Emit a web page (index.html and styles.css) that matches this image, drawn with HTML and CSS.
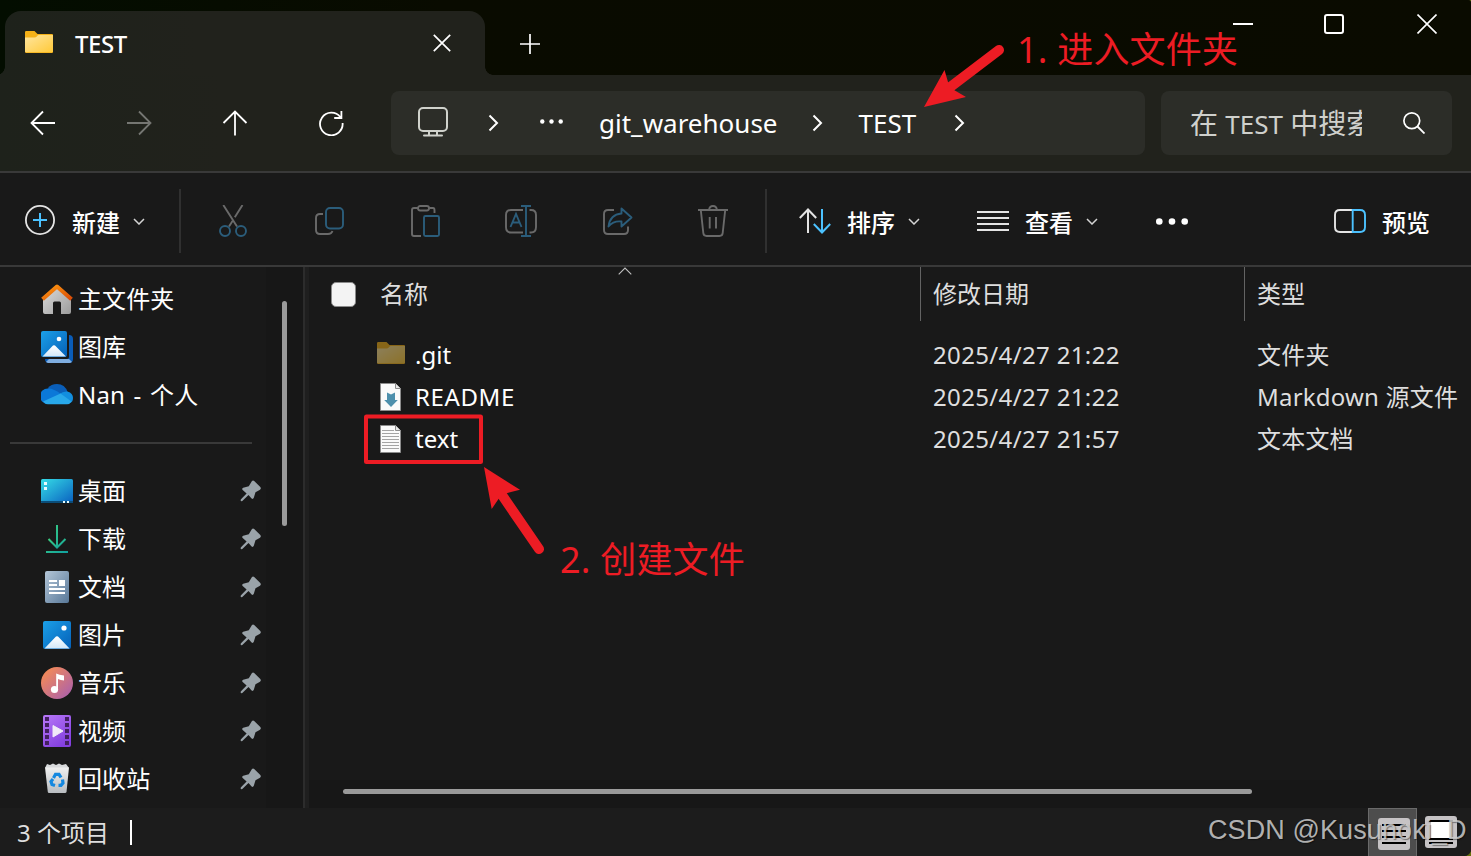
FILE: index.html
```html
<!DOCTYPE html>
<html lang="zh-CN">
<head>
    <meta charset="UTF-8">
    <meta name="viewport" content="width=device-width, initial-scale=1.0">
    <title>TEST</title>
    <link rel="stylesheet" href="styles.css">
</head>
<body>
    <!-- 公用图标 -->
    <svg class="defs" width="0" height="0">
        <defs>
            <linearGradient id="g-folder" x1="0" y1="0" x2="1" y2="1"><stop offset="0" stop-color="#ffe6a0"/><stop offset="1" stop-color="#ffc938"/></linearGradient>
            <linearGradient id="g-roof" x1="0" y1="0" x2="1" y2="1"><stop offset="0" stop-color="#ff9a10"/><stop offset="1" stop-color="#d84a08"/></linearGradient>
            <linearGradient id="g-wall" x1="0" y1="0" x2="1" y2="1"><stop offset="0" stop-color="#dedede"/><stop offset="1" stop-color="#9c9c9c"/></linearGradient>
            <linearGradient id="g-pic" x1="0" y1="0" x2="1" y2="1"><stop offset="0" stop-color="#1ba0e8"/><stop offset="1" stop-color="#0560b8"/></linearGradient>
            <linearGradient id="g-desk" x1="0" y1="0" x2="1" y2="1"><stop offset="0" stop-color="#35dce6"/><stop offset="1" stop-color="#0a60c0"/></linearGradient>
            <linearGradient id="g-down" x1="0" y1="0" x2="1" y2="1"><stop offset="0" stop-color="#3ccf80"/><stop offset="1" stop-color="#10a0a0"/></linearGradient>
            <linearGradient id="g-doc" x1="0" y1="0" x2="1" y2="1"><stop offset="0" stop-color="#b4c6d8"/><stop offset="1" stop-color="#587898"/></linearGradient>
            <linearGradient id="g-music" x1="0" y1="0" x2="1" y2="1"><stop offset="0.1" stop-color="#f58b55"/><stop offset="1" stop-color="#a45cb4"/></linearGradient>
            <linearGradient id="g-video" x1="0" y1="0" x2="0.6" y2="1"><stop offset="0" stop-color="#b878f8"/><stop offset="1" stop-color="#8440e0"/></linearGradient>
            <linearGradient id="g-snow" x1="0" y1="0" x2="0" y2="1"><stop offset="0" stop-color="#ffffff"/><stop offset="1" stop-color="#d2e8fa"/></linearGradient>
            <linearGradient id="g-bin" x1="0" y1="0" x2="0" y2="1"><stop offset="0" stop-color="#f0f0f0"/><stop offset="1" stop-color="#b8bcc0"/></linearGradient>
        </defs>
        <symbol id="folder" viewBox="0 0 28 22">
            <path d="M0 1.2Q0 0 1.2 0H9.500L12.500 3H27Q28 3 28 4V20.800Q28 22 26.800 22H1.200Q0 22 0 20.800Z" fill="#f5b117"/>
            <path d="M0 6.500H9.500Q11 6.500 12 5.200Q12.800 4 14 4H28V20.500Q28 21.300 27 21.300H1Q0 21.300 0 20.500Z" fill="url(#g-folder)"/>
        </symbol>
        <symbol id="pin" viewBox="0 0 22 22">
            <path d="M11.800 1.200Q13 0 14.200 1.100L20.300 7Q21.500 8.500 20 9.700L15.500 12.300L13.800 17.800Q13 19.600 11.600 18.400L8.500 15L2.300 21Q1.200 21.500 0.800 20.800Q0.300 20 1 19.200L6.600 13.500L2.400 9.800Q1.800 8.400 3.200 7.800L8.800 6.200Z" fill="#9aa3a9"/>
        </symbol>
        <symbol id="caret" viewBox="0 0 12 7"><path d="M1 1L6 6L11 1" fill="none" stroke="#d4d4d4" stroke-width="1.500"/></symbol>
        <symbol id="chevron" viewBox="0 0 11 18"><path d="M1.500 1.500L9 9L1.500 16.500" fill="none" stroke="#fff" stroke-width="2"/></symbol>
    </svg>

    <div class="window">
        <!-- 标题栏 -->
        <header class="titlebar">
            <div class="tab">
                <svg class="tab-icon" width="28" height="22"><use href="#folder"/></svg>
                <span class="tab-title">TEST</span>
                <svg class="tab-close" width="18" height="18" viewBox="0 0 18 18"><path d="M0.800 0.800L17.200 17.200M17.200 0.800L0.800 17.200" stroke="#fff" stroke-width="1.700"/></svg>
            </div>
            <svg class="new-tab" width="20" height="20" viewBox="0 0 20 20"><path d="M10 0V20M0 10H20" stroke="#fff" stroke-width="1.700"/></svg>
            <div class="controls">
                <span class="control"><svg width="20" height="20" viewBox="0 0 20 20"><path d="M0 10H20" stroke="#fff" stroke-width="2"/></svg></span>
                <span class="control maximize"><svg width="20" height="20" viewBox="0 0 20 20"><rect x="1" y="1" width="18" height="18" rx="2" fill="none" stroke="#fff" stroke-width="2"/></svg></span>
                <span class="control"><svg width="20" height="20" viewBox="0 0 20 20"><path d="M0.500 0.500L19.500 19.500M19.500 0.500L0.500 19.500" stroke="#fff" stroke-width="1.600"/></svg></span>
            </div>
        </header>

        <!-- 地址栏 -->
        <div class="navbar">
            <span class="nav-btn"><svg width="26" height="26" viewBox="0 0 26 26"><path d="M25 13H1.500M13 1.500L1.500 13L13 24.500" fill="none" stroke="#fff" stroke-width="1.800"/></svg></span>
            <span class="nav-btn disabled"><svg width="26" height="26" viewBox="0 0 26 26"><path d="M1 13H24.500M13 1.500L24.500 13L13 24.500" fill="none" stroke="#fff" stroke-width="1.800"/></svg></span>
            <span class="nav-btn"><svg width="26" height="26" viewBox="0 0 26 26"><path d="M13 25.500V1.500M1.500 13L13 1.500L24.500 13" fill="none" stroke="#fff" stroke-width="1.800"/></svg></span>
            <span class="nav-btn"><svg width="26" height="26" viewBox="0 0 26 26"><path d="M24.600 13A11.300 11.300 0 1 1 22.400 7.200M23.400 1V8H16.200" fill="none" stroke="#fff" stroke-width="1.800"/></svg></span>
            <div class="address">
                <svg class="pc" width="30" height="30" viewBox="0 0 30 30"><rect x="1" y="1" width="28" height="23" rx="4" fill="none" stroke="#d0d2cc" stroke-width="2"/><path d="M11 24V28M19 24V28M6 28.500H24" stroke="#d0d2cc" stroke-width="2" stroke-linecap="round"/></svg>
                <svg class="sep sep-root" width="11" height="18"><use href="#chevron"/></svg>
                <svg class="more" width="24" height="5" viewBox="0 0 24 5"><g fill="#fff"><circle cx="2.300" cy="2.500" r="2.200"/><circle cx="11.500" cy="2.500" r="2.200"/><circle cx="20.700" cy="2.500" r="2.200"/></g></svg>
                <span class="crumb">git_warehouse</span>
                <svg class="sep" width="11" height="18"><use href="#chevron"/></svg>
                <span class="crumb current">TEST</span>
                <svg class="sep" width="11" height="18"><use href="#chevron"/></svg>
            </div>
            <div class="search">
                <span class="search-text">在 <span class="latin">TEST</span> 中搜索</span>
                <svg width="22" height="22" viewBox="0 0 22 22"><circle cx="8.800" cy="8.800" r="7.900" fill="none" stroke="#fff" stroke-width="1.700"/><path d="M14.500 14.500L21.500 21.500" stroke="#fff" stroke-width="1.800"/></svg>
            </div>
        </div>

        <!-- 工具栏 -->
        <div class="toolbar">
            <div class="tool new">
                <svg width="30" height="30" viewBox="0 0 30 30"><circle cx="15" cy="15" r="14.100" fill="none" stroke="#e4e4e4" stroke-width="1.800"/><path d="M15 8V22M8 15H22" stroke="#4cc2ff" stroke-width="2"/></svg>
                <span>新建</span>
                <svg class="caret" width="12" height="7"><use href="#caret"/></svg>
            </div>
            <div class="divider"></div>
            <div class="actions">
                <svg width="32" height="32" viewBox="0 0 32 32" fill="none" stroke-width="1.900"><path d="M6.300 0L20 21.500M25.500 0L17.800 12.300M15.500 16L12 21.500" stroke="#6a6a6a"/><circle cx="8" cy="26" r="5" stroke="#2b5d7b"/><circle cx="24" cy="26" r="5" stroke="#2b5d7b"/></svg>
                <svg width="32" height="32" viewBox="0 0 32 32" fill="none" stroke-width="1.900"><path d="M10 9H7Q3 9 3 13V25Q3 29 7 29H15Q18.500 29 19.500 26" stroke="#6a6a6a"/><rect x="13" y="3" width="17" height="20.500" rx="4" stroke="#2b5d7b"/></svg>
                <svg width="32" height="32" viewBox="0 0 32 32" fill="none" stroke-width="1.900"><path d="M12 31H5Q3 31 3 29V5Q3 3 5 3H9M20 3H24Q25.500 3 25.500 5V8" stroke="#6a6a6a"/><rect x="9" y="1" width="11" height="4.500" rx="2.200" stroke="#6a6a6a"/><rect x="15" y="11" width="15" height="20" rx="1.500" stroke="#2b5d7b"/></svg>
                <svg width="32" height="32" viewBox="0 0 32 32" fill="none" stroke-width="1.900"><path d="M18 5H6Q1 5 1 10V22Q1 27.500 6 27.500H18M24.500 5H26Q31 5 31 10V22Q31 27.500 26 27.500H24.500" stroke="#6a6a6a"/><path d="M16 1H26M16 31H26M21 1V31M5.500 22L11 9L16.500 22M7.500 17.500H14.500" stroke="#2b5d7b"/></svg>
                <svg width="32" height="32" viewBox="0 0 32 32" fill="none" stroke-width="1.900" stroke-linejoin="round"><path d="M13 5H7Q3 5 3 9V25Q3 29 7 29H23Q27 29 27 25V21.500" stroke="#6a6a6a"/><path d="M20.500 3.500L30.500 12.500L20.500 21.500V16.500Q12.500 15.500 7.500 21.500Q9 9.500 20.500 8.500Z" stroke="#2b5d7b"/></svg>
                <svg width="32" height="32" viewBox="0 0 32 32" fill="none" stroke-width="1.900" stroke="#6a6a6a"><path d="M1 5H31M12 5Q12.500 1 16 1T20 5M3.800 5L6.300 28Q6.600 31 9.500 31H22.500Q25.400 31 25.700 28L28.200 5M12.700 12V23.500M19 12V23.500"/></svg>
            </div>
            <div class="divider"></div>
            <div class="tool sort">
                <svg width="32" height="26" viewBox="0 0 32 26" fill="none" stroke-width="2"><path d="M9 25V2M0.800 10L9 1.500L17.200 10" stroke="#e4e4e4"/><path d="M23 1V24M14.800 16L23 24.500L31.200 16" stroke="#4cc2ff"/></svg>
                <span>排序</span>
                <svg class="caret" width="12" height="7"><use href="#caret"/></svg>
            </div>
            <div class="tool view">
                <svg width="32" height="20" viewBox="0 0 32 20"><path d="M0 1H32M0 7H32M0 13H32M0 19H32" stroke="#e4e4e4" stroke-width="1.900"/></svg>
                <span>查看</span>
                <svg class="caret" width="12" height="7"><use href="#caret"/></svg>
            </div>
            <svg class="overflow" width="32" height="7" viewBox="0 0 32 7"><g fill="#fff"><circle cx="3.300" cy="3.500" r="3.300"/><circle cx="16" cy="3.500" r="3.300"/><circle cx="28.700" cy="3.500" r="3.300"/></g></svg>
            <div class="tool preview">
                <svg width="32" height="24" viewBox="0 0 32 24" fill="none" stroke-width="1.900"><path d="M18 1H6Q1 1 1 6V18Q1 23 6 23H18" stroke="#e4e4e4"/><path d="M18.700 1H26Q31 1 31 6V18Q31 23 26 23H18.700Z" stroke="#4cc2ff"/></svg>
                <span>预览</span>
            </div>
        </div>

        <div class="content">
            <!-- 侧边栏 -->
            <aside class="sidebar">
                <ul class="places">
                    <li>
                        <svg width="32" height="32" viewBox="0 0 32 32"><path d="M2 14L16 2L30 14V29Q30 31 28 31H20V20Q20 18.500 18.500 18.500H13.500Q12 18.500 12 20V31H4Q2 31 2 29Z" fill="url(#g-wall)"/><path d="M1.500 16.300L16 3.500L30.500 16.300" fill="none" stroke="url(#g-roof)" stroke-width="4" stroke-linejoin="round"/></svg>
                        <span>主文件夹</span>
                    </li>
                    <li>
                        <svg width="32" height="32" viewBox="0 0 32 32"><path d="M28 4Q32 4 32 8V28Q32 32 28 32H8Q4 32 4 28H26Q28 28 28 26Z" fill="#0a5cb8"/><path d="M5 31L8 28H28L31 31L29 32H7Z" fill="#80aee0"/><rect width="26" height="26" rx="2" fill="url(#g-pic)"/><path d="M1.500 25.500L11 15.500Q13 13 15 15.500L25 25.500Z" fill="url(#g-snow)"/><circle cx="18" cy="8" r="2.300" fill="#fff"/></svg>
                        <span>图库</span>
                    </li>
                    <li>
                        <svg width="32" height="32" viewBox="0 0 32 32"><path d="M7 9Q10 5 16 5Q24 5 26.500 13L12 18Z" fill="#0a5eb8"/><path d="M7 9.500Q12 9 20 15L7 25H6.500A7.700 7.700 0 0 1 7 9.500" fill="#0b78d8"/><path d="M18.500 15Q22 12 26.500 12.500Q32 14 32 19Q32 23 29 24Z" fill="#128edf"/><path d="M2 22.500L19.500 14.500L30.500 22.500Q29 25.200 26 25.200H7Q4 25.200 2 22.500Z" fill="#28a8ea"/></svg>
                        <span class="account">Nan - 个人</span>
                    </li>
                </ul>
                <hr class="split">
                <ul class="places">
                    <li>
                        <svg width="32" height="32" viewBox="0 0 32 32"><rect y="4" width="32" height="24" rx="1.500" fill="url(#g-desk)"/><path d="M0 26H32V26.500Q32 28 30.500 28H1.500Q0 28 0 26.500Z" fill="#0b4d78"/><path d="M3 7H6V10H3ZM3 12H6V15H3ZM22 26H24V28H22ZM26 26H28V28H26Z" fill="#e8fbff"/></svg>
                        <span>桌面</span>
                        <svg class="pin" width="22" height="22"><use href="#pin"/></svg>
                    </li>
                    <li>
                        <svg width="32" height="32" viewBox="0 0 32 32"><path d="M7.500 16L16 24.500L24.500 16" fill="none" stroke="url(#g-down)" stroke-width="2"/><path d="M15 2H17V24H15ZM5 28H27V30H5Z" fill="url(#g-down)"/></svg>
                        <span>下载</span>
                        <svg class="pin" width="22" height="22"><use href="#pin"/></svg>
                    </li>
                    <li>
                        <svg width="32" height="32" viewBox="0 0 32 32"><rect x="4" width="24" height="32" rx="2" fill="url(#g-doc)"/><path d="M8 9H16V11H8ZM8 13H16V15H8ZM18 9H24V15H18ZM8 17H24V19H8ZM8 21H24V23H8Z" fill="#fff"/></svg>
                        <span>文档</span>
                        <svg class="pin" width="22" height="22"><use href="#pin"/></svg>
                    </li>
                    <li>
                        <svg width="32" height="32" viewBox="0 0 32 32"><rect x="2" y="2" width="28" height="28" rx="2" fill="url(#g-pic)"/><path d="M3.500 29.500L14 18.500Q16 16 18 18.500L28.500 29.500Z" fill="url(#g-snow)"/><circle cx="23" cy="9" r="2.600" fill="#fff"/></svg>
                        <span>图片</span>
                        <svg class="pin" width="22" height="22"><use href="#pin"/></svg>
                    </li>
                    <li>
                        <svg width="32" height="32" viewBox="0 0 32 32"><circle cx="16" cy="16" r="16" fill="url(#g-music)"/><circle cx="13.500" cy="22.500" r="3.600" fill="#fff"/><path d="M15.200 23V6.500Q18 8 23 8.500V13.500Q19.500 13.200 17 12V23Z" fill="#fff"/></svg>
                        <span>音乐</span>
                        <svg class="pin" width="22" height="22"><use href="#pin"/></svg>
                    </li>
                    <li>
                        <svg width="32" height="32" viewBox="0 0 32 32"><rect x="2" width="28" height="32" rx="2" fill="url(#g-video)"/><path d="M4 2H8V6H4ZM4 8H8V12H4ZM4 14H8V18H4ZM4 20H8V24H4ZM4 26H8V30H4ZM24 2H28V6H24ZM24 8H28V12H24ZM24 14H28V18H24ZM24 20H28V24H24ZM24 26H28V30H24Z" fill="#432060"/><path d="M12 10.500L22 16L12 22Z" fill="#f0eaf8" stroke="#f0eaf8" stroke-linejoin="round"/></svg>
                        <span>视频</span>
                        <svg class="pin" width="22" height="22"><use href="#pin"/></svg>
                    </li>
                    <li>
                        <svg width="32" height="32" viewBox="0 0 32 32"><path d="M4 5L6 1L9 2L12 0.500L15 2L18 0.500L21 2L25 1L28 5Z" fill="#d8dadc"/><path d="M4 4.500H28L25.500 29Q25.200 30 24 30H8Q7 30 6.800 29Z" fill="url(#g-bin)"/><g fill="none" stroke="#1488e0" stroke-width="3.200"><path d="M12.500 15L14.500 11.300H18L20 14.500"/><path d="M21.500 16.500L22 20L20 22.300H17.500"/><path d="M14 22.500L11 21.500L10 18.500L12 16"/></g></svg>
                        <span>回收站</span>
                        <svg class="pin" width="22" height="22"><use href="#pin"/></svg>
                    </li>
                </ul>
                <div class="v-thumb"></div>
            </aside>

            <!-- 文件列表 -->
            <main class="files">
                <div class="row head">
                    <div class="name"><span class="checkbox"></span>名称</div>
                    <div class="date">修改日期</div>
                    <div class="type">类型</div>
                    <svg class="sort-mark" width="14" height="8" viewBox="0 0 14 8"><path d="M0.700 7.300L7 1L13.300 7.300" fill="none" stroke="#c0c0c0" stroke-width="1.100"/></svg>
                </div>
                <div class="row">
                    <div class="name"><svg class="dim" width="28" height="28" viewBox="0 0 28 28"><use href="#folder" y="1" width="28" height="22"/></svg>.git</div>
                    <div class="date">2025/4/27 21:22</div>
                    <div class="type">文件夹</div>
                </div>
                <div class="row">
                    <div class="name readme"><svg width="28" height="28" viewBox="0 0 28 28"><path d="M3.500 0.500H18.500L23.500 5.500V27.500H3.500Z" fill="#fafafa" stroke="#8c8c8c"/><path d="M18.500 0.500V5.500H23.500" fill="#e8e8e8" stroke="#8c8c8c"/><path d="M10 9.500L14 11.500L18 9.500V17H20.800L14 24L7.200 17H10Z" fill="#4d8fac"/></svg>README</div>
                    <div class="date">2025/4/27 21:22</div>
                    <div class="type">Markdown 源文件</div>
                </div>
                <div class="row">
                    <div class="name"><svg width="28" height="28" viewBox="0 0 28 28"><path d="M3.500 0.500H18.500L23.500 5.500V27.500H3.500Z" fill="#fafafa" stroke="#8c8c8c"/><path d="M18.500 0.500V5.500H23.500" fill="#e8e8e8" stroke="#8c8c8c"/><path d="M5 5.500H17M5 8.500H22M5 11.500H22M5 14.500H22M5 17.500H22M5 20.500H22M5 23.500H22" stroke="#a4a4a4"/></svg>text</div>
                    <div class="date">2025/4/27 21:57</div>
                    <div class="type">文本文档</div>
                </div>
                <div class="h-scroll"><div class="h-thumb"></div></div>
            </main>
        </div>

        <!-- 状态栏 -->
        <footer class="statusbar">
            <span class="count">3 个项目</span>
            <span class="bar"></span>
            <div class="view-modes">
                <span class="mode active"><svg width="32" height="32" viewBox="0 0 32 32"><rect width="32" height="32" rx="3" fill="#c6c3c5"/><path d="M4 7H28M4 13H28M4 19H28M4 25H28" stroke="#000" stroke-width="2"/></svg></span>
                <span class="mode"><svg width="32" height="32" viewBox="0 0 32 32"><rect width="32" height="32" rx="3" fill="#c6c3c5"/><path d="M4 5H28M4 23H28M4 27H28" stroke="#000" stroke-width="2"/><rect x="6" y="6" width="20" height="16" fill="#fff"/></svg></span>
            </div>
            <span class="watermark">CSDN @Kusunoki_D</span>
        </footer>

        <!-- 标注 -->
        <svg class="marks" width="1471" height="856" viewBox="0 0 1471 856">
            <g fill="#ed1c24" stroke="#ed1c24">
                <path d="M999 50L951 86.500M539 549L503 496.500" stroke-width="10" stroke-linecap="round"/>
                <path d="M924 107L944.500 70L948 82L954 90L966 97Z" stroke="none"/>
                <path d="M484 467L520 489.700L507.500 493L498.500 499L491.700 509Z" stroke="none"/>
                <rect x="366" y="416.500" width="115" height="45.500" rx="0.500" fill="none" stroke-width="4"/>
            </g>
        </svg>
        <span class="note note-enter">1. 进入文件夹</span>
        <span class="note note-create">2. 创建文件</span>
    </div>
</body>
</html>
```
FILE: styles.css
```css
* {
    margin: 0;
    padding: 0;
    box-sizing: border-box;
}

body {
    width: 1471px;
    height: 856px;
    overflow: hidden;
    background-color: #66700c;
    color: #fff;
    font-family: "Noto Sans", "Noto Sans CJK SC", sans-serif;
    font-size: 24px;
    line-height: 32px;
}

svg {
    display: block;
    flex: none;
}

.defs {
    position: absolute;
}

.window {
    position: relative;
    display: flex;
    flex-direction: column;
    height: 856px;
    overflow: hidden;
    background-color: #191919;
    border-radius: 0 3px 7px 0;
    white-space: nowrap;
}

/* 标题栏 */
.titlebar {
    display: flex;
    height: 75px;
    background: linear-gradient(90deg, #030d00, #090b00 30%, #0a0b00);
}

.tab {
    position: relative;
    display: flex;
    align-items: center;
    width: 480px;
    height: 64px;
    margin: 11px 0 0 5px;
    padding: 0 34px 0 20px;
    background: linear-gradient(90deg, #1e221b, #21221c 40%);
    border-radius: 16px 16px 0 0;
}

.tab::before,
.tab::after {
    content: "";
    position: absolute;
    bottom: 0;
    width: 8px;
    height: 8px;
}

.tab::before {
    left: -8px;
    background: radial-gradient(circle at 0 0, transparent 7.5px, #1e221b 8px);
}

.tab::after {
    right: -8px;
    background: radial-gradient(circle at 100% 0, transparent 7.5px, #21221c 8px);
}

.tab-icon {
    margin-top: -2px;
}

.tab-title {
    margin: 2px 0 0 22px;
    font-weight: 500;
    letter-spacing: -0.4px;
}

.tab-close {
    margin: -1px 0 0 auto;
}

.new-tab {
    margin: 34px 0 0 35px;
}

.controls {
    display: flex;
    gap: 4px;
    margin-left: auto;
}

.control {
    display: flex;
    align-items: center;
    justify-content: center;
    width: 88px;
    height: 48px;
}

.maximize {
    padding-right: 2px;
}

/* 地址栏 */
.navbar {
    display: flex;
    align-items: center;
    height: 98px;
    padding: 0 19px 0 7px;
    background: linear-gradient(90deg, #1e221b, #21221c 15%);
    border-bottom: 2px solid #393939;
}

.nav-btn {
    display: flex;
    justify-content: center;
    width: 72px;
    margin: -1px 24px 0 0;
}

.disabled {
    opacity: 0.38;
}

.address,
.search {
    display: flex;
    align-items: center;
    height: 64px;
    background-color: #2c2d28;
    border-radius: 8px;
}

.address {
    width: 754px;
    padding-left: 27px;
    font-size: 26px;
}

.pc {
    margin-top: -3px;
}

.sep-root {
    margin-left: 40px;
}

.more {
    margin: -4px 35px 0 41px;
}

.crumb {
    margin-right: 34px;
}

.sep + .crumb {
    margin-left: 36px;
}

.crumb.current {
    margin-right: 38px;
}

.search {
    width: 291px;
    margin-left: 16px;
    padding: 0 27px 0 29px;
    justify-content: space-between;
}

.search-text {
    width: 172px;
    overflow: hidden;
    color: #cfd0cc;
    font-size: 28px;
    line-height: 40px;
}

.latin {
    font-size: 26px;
}

/* 工具栏 */
.toolbar {
    display: flex;
    align-items: center;
    height: 94px;
    padding: 4px 41px 0 25px;
    background-color: #191919;
    border-bottom: 2px solid #393939;
}

.tool {
    display: flex;
    align-items: center;
}

.tool span {
    margin-top: 3px;
    font-weight: 500;
}

.new span {
    margin-left: 17px;
}

.new > svg:first-child {
    margin-top: -3px;
}

.caret {
    margin-left: 13px;
}

.divider {
    width: 2px;
    height: 64px;
    background-color: #303030;
}

.new + .divider {
    margin-left: 34px;
}

.actions {
    display: flex;
    gap: 64px;
    margin: 0 36px;
}

.sort {
    margin-left: 32px;
}

.sort span,
.view span,
.preview span {
    margin-left: 16px;
}

.view {
    margin-left: 57px;
}

.overflow {
    margin-left: 58px;
}

.preview {
    margin-left: auto;
}

/* 主体 */
.content {
    display: flex;
    height: 541px;
}

.sidebar {
    position: relative;
    width: 305px;
    padding: 9px 0 0 10px;
    border-right: 2px solid #2c2c2c;
    background: linear-gradient(90deg, #191919 266px, #171717 266px);
}

.places {
    list-style: none;
}

.places li {
    display: flex;
    align-items: center;
    width: 252px;
    height: 48px;
    padding-left: 31px;
}

.places span {
    margin: -2px 0 0 5px;
    letter-spacing: 0.1px;
}

.places .account {
    letter-spacing: 0.2px;
    word-spacing: 2px;
}

.places svg:first-child {
    margin-top: -2px;
}

.places .pin {
    margin: -2px 0 0 auto;
}

.split {
    width: 242px;
    height: 2px;
    margin: 22px 0 24px;
    border: 0;
    background-color: #393939;
}

.v-thumb {
    position: absolute;
    top: 34px;
    left: 282px;
    width: 5px;
    height: 225px;
    background-color: #9a9a9a;
    border-radius: 3px;
}

.files {
    display: flex;
    flex: 1;
    flex-direction: column;
    min-width: 0;
    border-left: 4px solid #1f1f1f;
}

.row {
    display: grid;
    grid-template-columns: 611px 324px 1fr;
    align-items: center;
    height: 42px;
    color: #dedede;
}

.head {
    position: relative;
    height: 54px;
    margin-bottom: 13px;
}

.row .name {
    display: flex;
    align-items: center;
    gap: 10px;
    padding-left: 68px;
    color: #fff;
}

.row .date,
.row .type {
    padding-left: 13px;
}

.row .date {
    letter-spacing: 0.35px;
}

.row .type {
    letter-spacing: 0.2px;
}

.row .readme {
    letter-spacing: 0.6px;
}

.head .name {
    gap: 24px;
    padding-left: 22px;
    color: #dedede;
}

.head .date,
.head .type {
    height: 54px;
    padding-left: 12px;
    border-left: 1px solid #636363;
    line-height: 54px;
    letter-spacing: 0;
}

.checkbox {
    width: 25px;
    height: 25px;
    background-color: #f3f3f3;
    border: 1px solid #8a8a8a;
    border-radius: 5px;
}

.sort-mark {
    position: absolute;
    top: 0;
    left: 309px;
}

.dim {
    opacity: 0.5;
}

.h-scroll {
    height: 28px;
    margin-top: auto;
    padding: 9px 0 0 34px;
    background-color: #171717;
}

.h-thumb {
    width: 909px;
    height: 5px;
    background-color: #9a9a9a;
    border-radius: 3px;
}

/* 状态栏 */
.statusbar {
    position: relative;
    display: flex;
    align-items: center;
    height: 48px;
    padding-left: 17px;
    background-color: #1c1c1c;
}

.count {
    margin-top: 2px;
    color: #dedede;
}

.bar {
    width: 2px;
    height: 25px;
    margin-left: 21px;
    background-color: #fff;
}

.view-modes {
    display: flex;
    margin-left: auto;
    padding-right: 5px;
}

.mode {
    display: flex;
    width: 49px;
    height: 48px;
    padding: 8px 0 0 8px;
}

.mode.active {
    padding: 9px 0 0 9px;
    background-color: #4d4d4d;
    border: 1px solid #6a6a6a;
    border-bottom: 0;
}

.watermark {
    position: absolute;
    top: 6px;
    left: 1208px;
    color: rgba(205, 205, 205, 0.85);
    font-family: "Liberation Sans", sans-serif;
    font-size: 27px;
    letter-spacing: 0.1px;
    text-shadow: 1px 1px 1px rgba(0, 0, 0, 0.4);
}

/* 标注 */
.marks {
    position: absolute;
    top: 0;
    left: 0;
}

.note {
    position: absolute;
    color: #ed1c24;
    font-size: 36px;
    line-height: 48px;
    letter-spacing: 0.2px;
}

.note-enter {
    top: 26px;
    left: 1017px;
}

.note-create {
    top: 536px;
    left: 560px;
}
```
